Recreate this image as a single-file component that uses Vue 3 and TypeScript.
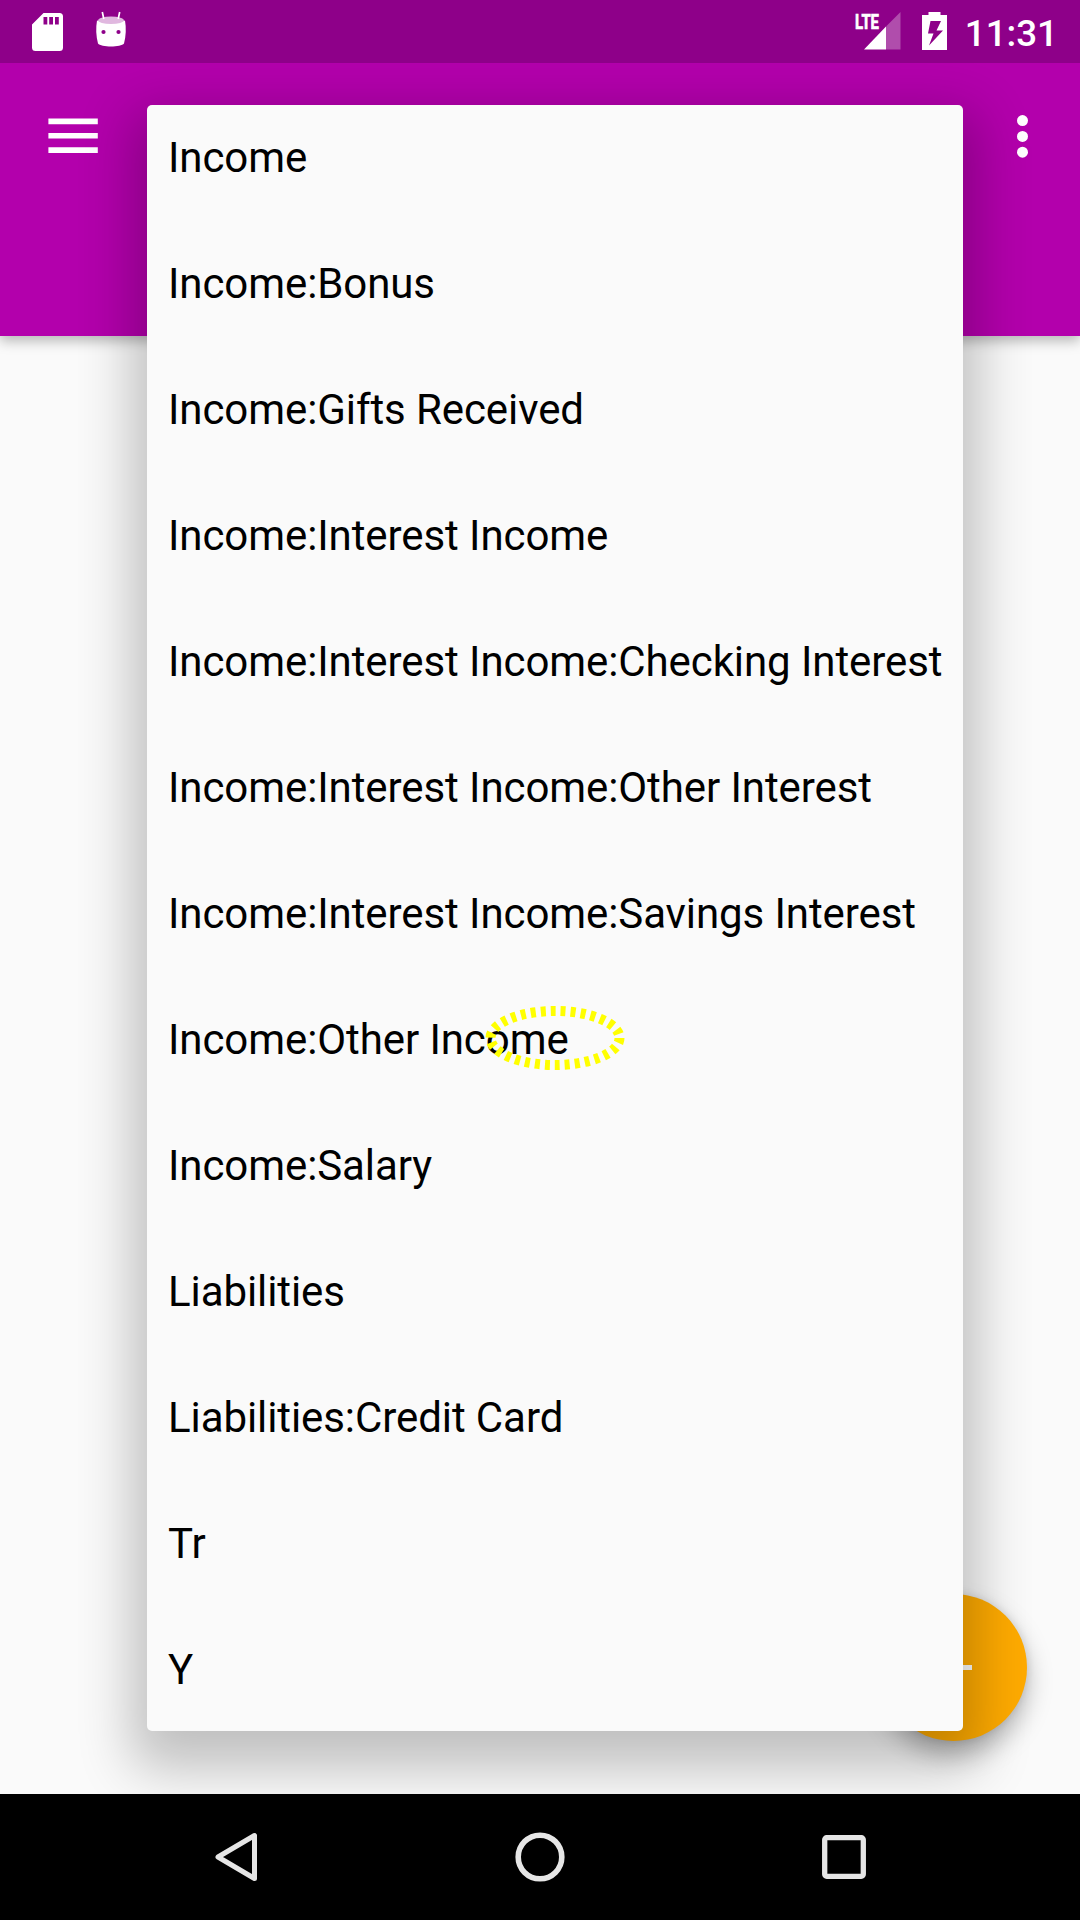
<script setup lang="ts">
const accounts: string[] = [
  'Income',
  'Income:Bonus',
  'Income:Gifts Received',
  'Income:Interest Income',
  'Income:Interest Income:Checking Interest',
  'Income:Interest Income:Other Interest',
  'Income:Interest Income:Savings Interest',
  'Income:Other Income',
  'Income:Salary',
  'Liabilities',
  'Liabilities:Credit Card',
  'Tr',
  'Y',
]
</script>

<template>
  <div class="screen">
    <header class="status">
      <div class="notifications">
        <svg class="sd" width="31" height="38" viewBox="0 0 31 38">
          <path fill="#fff" fill-rule="evenodd" d="M11.5 0H27.5Q31 0 31 3.5V34.5Q31 38 27.5 38H3.500Q0 38 0 34.500V11.500ZM11.500 4V11.500H15.300V4ZM17.200 4V11.500H21V4ZM23 4V11.500H26.800V4Z" />
        </svg>
        <svg class="droid" width="32" height="38" viewBox="0 0 32 38">
          <path fill="#fff" d="M2 9.500Q16 14 30 9.500Q32 21 29 32.500C26 36.500 6 36.500 3 32.500Q0 21 2 9.500Z" />
          <ellipse cx="16" cy="9.300" rx="13" ry="3.700" fill="#e0b8df" />
          <path d="M7.300 1 8.800 8M24.700 1 23.200 8" stroke="#fff" stroke-width="1.700" />
          <circle cx="8.500" cy="21" r="2.100" fill="#8e0089" />
          <circle cx="23.500" cy="21" r="2.100" fill="#8e0089" />
        </svg>
      </div>
      <div class="system">
        <svg class="signal" width="50" height="50" viewBox="0 0 50 50">
          <path fill="#fff" fill-opacity=".3" d="M48.500 11V48.500H34V25.500Z" />
          <path fill="#fff" d="M34 25.500V48.500H12Z" />
          <text x="3" y="28" textLength="24" lengthAdjust="spacingAndGlyphs" class="lte">LTE</text>
        </svg>
        <svg class="battery" width="25" height="38" viewBox="0 0 25 38">
          <path fill="#fff" fill-rule="evenodd" d="M6.500 0H18.500V3H25V38H0V3H6.500ZM8.500 9 6 21.500H11.500L7 33.500 21 18.500H14.500L19 9Z" />
        </svg>
        <span class="clock">11:31</span>
      </div>
    </header>

    <div class="appbar">
      <svg width="50" height="35" viewBox="0 0 50 35">
        <path fill="#fff" d="M.4 .500H49.800V6.200H.4ZM.4 15H49.800V20.500H.4ZM.4 29.200H49.800V34.900H.4Z" />
      </svg>
      <svg width="11" height="43" viewBox="0 0 11 43">
        <g fill="#fff">
          <circle cx="5.500" cy="5.600" r="5.500" />
          <circle cx="5.500" cy="21.400" r="5.500" />
          <circle cx="5.500" cy="37.200" r="5.500" />
        </g>
      </svg>
    </div>

    <main class="content">
      <button class="fab" aria-label="Add">
        <svg width="37" height="37" viewBox="0 0 37 37">
          <path fill="#fff" d="M16 0H21V16H37V21H21V37H16V21H0V16H16Z" />
        </svg>
      </button>
    </main>

    <nav class="navbar">
      <svg width="44" height="52" viewBox="0 0 44 52">
        <path d="M40.500 4.500V47.500L4 26Z" fill="none" stroke="#e6e6e6" stroke-width="5" stroke-linejoin="round" />
      </svg>
      <svg width="50" height="50" viewBox="0 0 50 50">
        <circle cx="25" cy="25" r="21.800" fill="none" stroke="#e6e6e6" stroke-width="5.600" />
      </svg>
      <svg width="44" height="44" viewBox="0 0 44 44">
        <rect x="2.700" y="2.700" width="38.600" height="38.600" rx="2" fill="none" stroke="#e6e6e6" stroke-width="5.300" />
      </svg>
    </nav>

    <div class="shade">
      <div class="popup">
        <ul class="list">
          <li v-for="account in accounts" :key="account">{{ account }}</li>
        </ul>
        <svg class="marker" width="140" height="66" viewBox="0 0 140 66">
          <ellipse cx="70" cy="33" rx="64.500" ry="27" fill="none" stroke="#ff0" stroke-width="10" stroke-dasharray="5 5" />
        </svg>
      </div>
    </div>
  </div>
</template>

<style>
body {
  margin: 0;
}
</style>

<style scoped>
.screen {
  position: relative;
  display: flex;
  flex-direction: column;
  width: 1080px;
  height: 1920px;
  overflow: hidden;
  background: #fafafa;
  font-family: Roboto, sans-serif;
}
svg {
  display: block;
  flex: none;
}
.status {
  display: flex;
  justify-content: space-between;
  height: 63px;
  box-sizing: border-box;
  padding: 0 22px 0 32px;
  background: #8e0089;
  position: relative;
  z-index: 3;
}
.notifications,
.system {
  display: flex;
  align-items: flex-start;
}
.sd {
  margin-top: 12.5px;
}
.droid {
  margin: 10.5px 0 0 31.5px;
}
.signal {
  margin-top: 1px;
}
.battery {
  margin: 12px 0 0 20px;
}
.lte {
  font: 700 21px Roboto, sans-serif;
  fill: #fff;
  stroke: #fff;
  stroke-width: 0.7px;
}
.clock {
  margin-left: 18px;
  color: #fff;
  font-size: 36.75px;
  font-weight: 500;
  line-height: 67px;
}
.appbar {
  display: flex;
  justify-content: space-between;
  height: 273px;
  box-sizing: border-box;
  padding: 52px 52px 0 48px;
  background: #b300ac;
  box-shadow: 0 5px 12px rgba(0, 0, 0, 0.27);
  position: relative;
  z-index: 1;
}
.appbar svg:first-child {
  margin-top: 3px;
}
.content {
  flex: 1;
  display: flex;
  justify-content: flex-end;
  align-items: flex-end;
  padding: 0 53px 53px 0;
}
.fab {
  display: flex;
  align-items: center;
  justify-content: center;
  width: 147px;
  height: 147px;
  padding: 0;
  border: 0;
  border-radius: 50%;
  background: #ffab00;
  box-shadow: 0 13px 26px rgba(0, 0, 0, 0.28), 0 0 8px rgba(0, 0, 0, 0.1);
}
.navbar {
  display: flex;
  align-items: center;
  justify-content: space-between;
  height: 126px;
  box-sizing: border-box;
  padding: 0 214px 0 214px;
  background: #000;
  position: relative;
  z-index: 3;
}
.shade {
  position: absolute;
  inset: 0;
  z-index: 2;
}
.popup {
  position: relative;
  width: 816px;
  height: 1626px;
  margin: 105px 0 0 147px;
  border-radius: 5px;
  background: #fafafa;
  box-shadow: 0 22px 54px 15px rgba(0, 0, 0, 0.24);
}
.list {
  height: 100%;
  margin: 0;
  padding: 0;
  overflow: hidden;
  list-style: none;
}
.list li {
  height: 126px;
  padding: 0 21px;
  color: #000;
  font-size: 42px;
  letter-spacing: -0.085px;
  line-height: 126px;
  white-space: nowrap;
}
.list li:first-child {
  margin-top: -10px;
}
.marker {
  position: absolute;
  left: 338px;
  top: 900px;
}
</style>
